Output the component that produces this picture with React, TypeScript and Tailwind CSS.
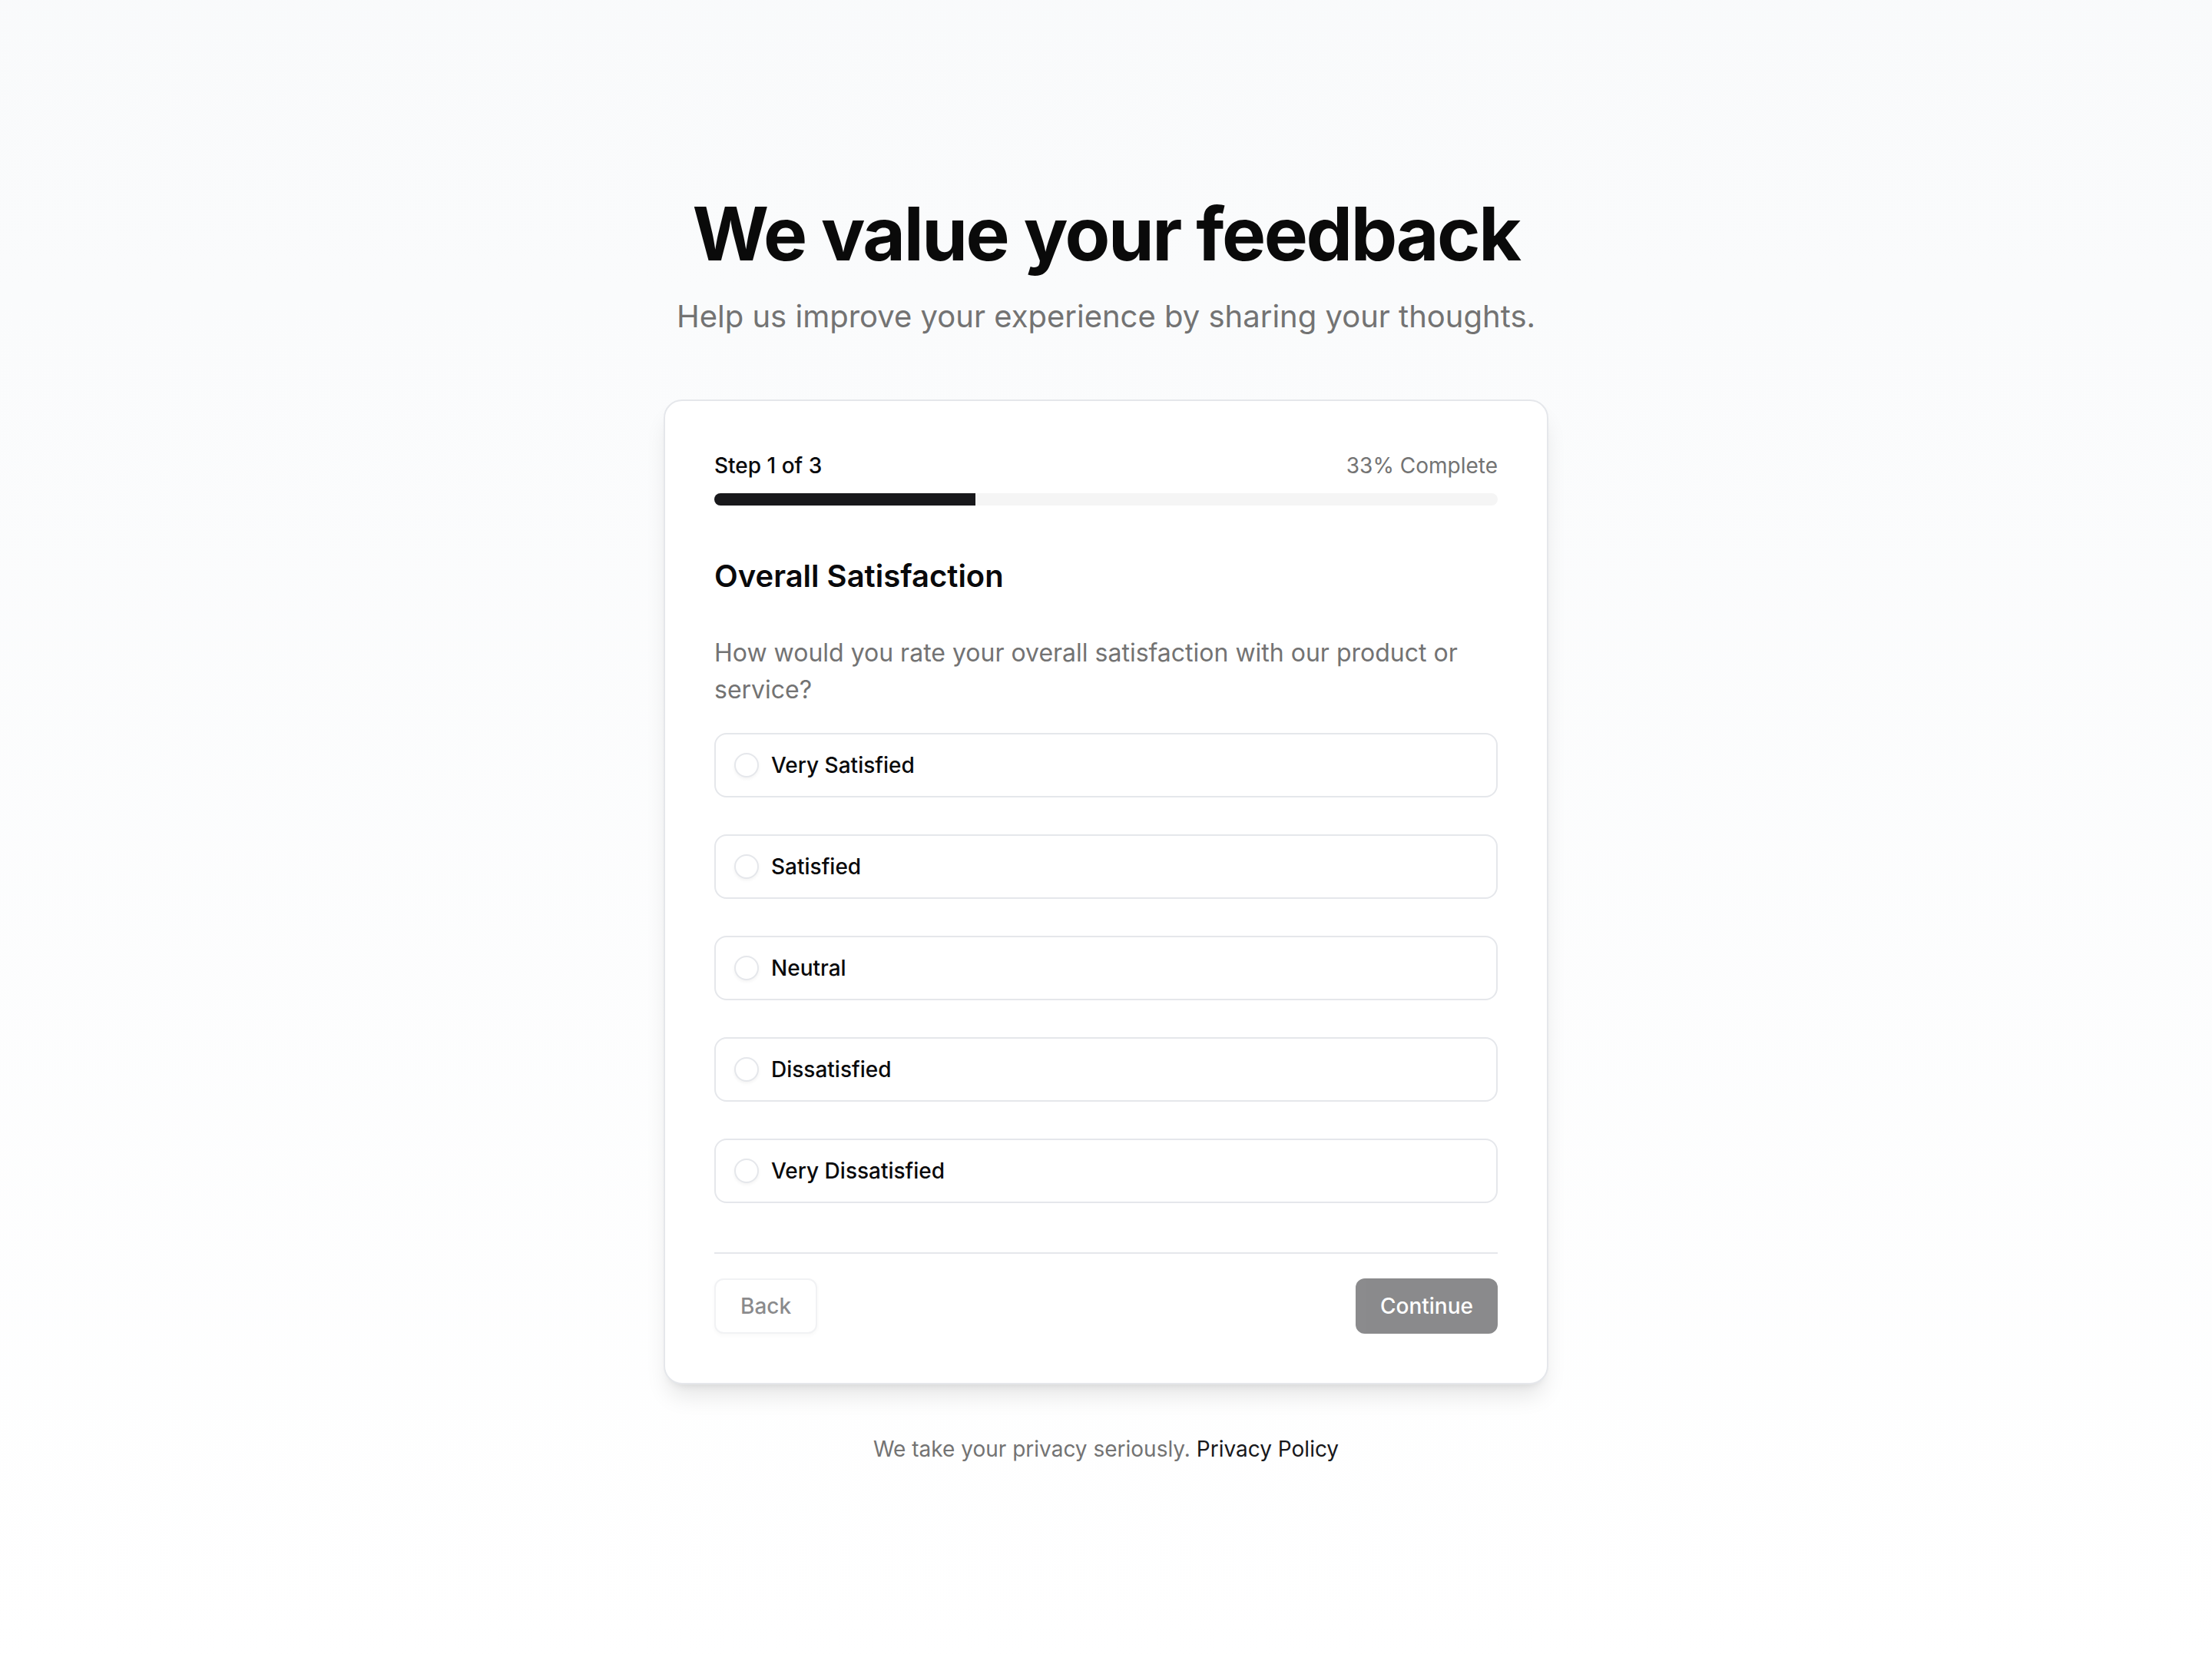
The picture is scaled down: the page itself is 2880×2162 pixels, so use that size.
import React, { useState } from "react";

const OPTIONS = [
  { id: "very-satisfied", label: "Very Satisfied" },
  { id: "satisfied", label: "Satisfied" },
  { id: "neutral", label: "Neutral" },
  { id: "dissatisfied", label: "Dissatisfied" },
  { id: "very-dissatisfied", label: "Very Dissatisfied" },
];

const STEP = 1;
const TOTAL_STEPS = 3;

export default function App() {
  const [selected, setSelected] = useState<string | null>(null);
  const percent = Math.round((STEP / TOTAL_STEPS) * 100);

  return (
    <div
      className="flex min-h-screen items-center justify-center bg-gradient-to-b from-gray-50 to-white px-8 text-zinc-950"
      style={{ fontFamily: "Inter, 'Noto Sans', sans-serif" }}
    >
      <div className="flex w-full max-w-[1152px] flex-col items-center">
        <h1 className="text-[96px] leading-none font-bold tracking-tight text-neutral-950">
          We value your feedback
        </h1>
        <p className="mt-8 text-[40px] leading-[56px] text-neutral-500">
          Help us improve your experience by sharing your thoughts.
        </p>

        <div className="mt-20 w-full rounded-[24px] border-2 border-gray-200 bg-white p-16 shadow-[0_20px_30px_-6px_rgb(0_0_0/0.1),0_8px_12px_-8px_rgb(0_0_0/0.1)]">
          <div className="mb-4 flex items-center justify-between text-[28px] leading-[40px]">
            <span className="font-medium text-zinc-950">
              Step {STEP} of {TOTAL_STEPS}
            </span>
            <span className="text-neutral-500">{percent}% Complete</span>
          </div>
          <div className="h-4 w-full overflow-hidden rounded-full bg-neutral-100">
            <div className="h-full bg-zinc-900" style={{ width: `${(STEP / TOTAL_STEPS) * 100}%` }} />
          </div>

          <h2 className="mt-16 text-[40px] leading-[56px] font-semibold text-zinc-950">
            Overall Satisfaction
          </h2>
          <p className="mt-12 text-[32px] leading-[48px] text-neutral-500">
            How would you rate your overall satisfaction with our product or service?
          </p>

          <div className="mt-8 flex flex-col gap-12">
            {OPTIONS.map((option) => {
              const active = selected === option.id;
              return (
                <label
                  key={option.id}
                  className="flex cursor-pointer items-center gap-4 rounded-2xl border-2 border-gray-200 px-6 py-5 text-[28px] leading-[40px] font-medium text-zinc-950"
                >
                  <input
                    type="radio"
                    name="satisfaction"
                    className="sr-only"
                    checked={active}
                    onChange={() => setSelected(option.id)}
                  />
                  <span className="flex size-8 shrink-0 items-center justify-center rounded-full border-2 border-gray-200 bg-white shadow-[0_2px_4px_rgb(0_0_0/0.05)]">
                    {active ? <span className="size-4 rounded-full bg-zinc-900" /> : null}
                  </span>
                  {option.label}
                </label>
              );
            })}
          </div>

          <div className="mt-16 flex items-center justify-between border-t-2 border-gray-200 pt-8">
            <button
              type="button"
              disabled
              className="h-[72px] rounded-xl border-2 border-gray-200 bg-white px-8 text-[28px] font-medium text-zinc-900 opacity-50 shadow-[0_2px_4px_rgb(0_0_0/0.05)]"
            >
              Back
            </button>
            <button
              type="button"
              disabled={!selected}
              className="h-[72px] rounded-xl bg-zinc-900 px-8 text-[28px] font-medium text-white disabled:opacity-50"
            >
              Continue
            </button>
          </div>
        </div>

        <p className="mt-16 text-[28px] leading-[40px] text-neutral-500">
          We take your privacy seriously.{" "}
          <a href="#" className="text-zinc-900">
            Privacy Policy
          </a>
        </p>
      </div>
    </div>
  );
}
